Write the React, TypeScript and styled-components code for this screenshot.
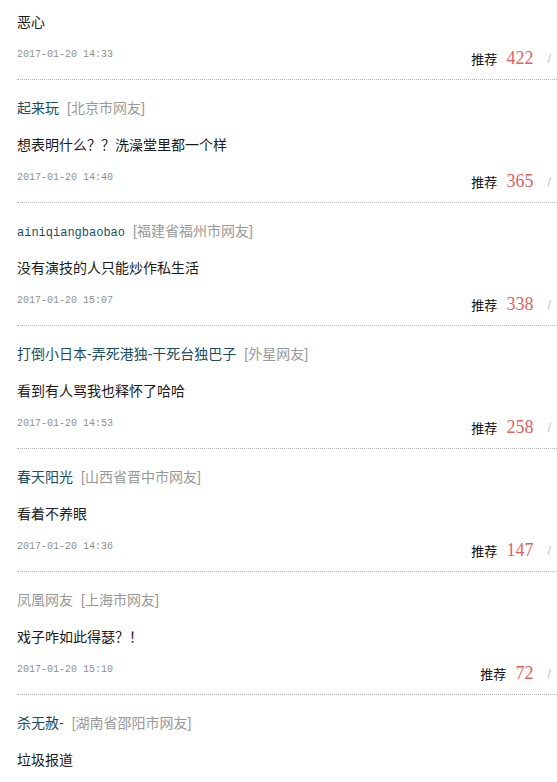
import React from "react";
import styled, { createGlobalStyle } from "styled-components";

const GlobalStyle = createGlobalStyle`
    html, body {
        margin: 0;
        padding: 0;
        background: #fff;
        overflow: hidden;
    }
    body {
        font-family: "Liberation Sans", "Noto Sans CJK SC", sans-serif;
    }
`;

const List = styled.div`
    width: 557px;
    padding-left: 17px;
    box-sizing: border-box;
`;

const Entry = styled.div<{ $partial?: boolean }>`
    padding-top: ${({ $partial }) => ($partial ? "12px" : "18px")};
    padding-bottom: 9px;
    border-bottom: 1px dotted #b4b4b4;
`;

const NameRow = styled.div`
    display: flex;
    align-items: baseline;
    height: 20px;
    line-height: 20px;
    font-size: 14px;
    margin-bottom: 17px;
    white-space: nowrap;
`;

const Name = styled.span<{ $anon?: boolean; $latin?: boolean }>`
    color: ${({ $anon }) => ($anon ? "#999" : "#1b4d62")};
    font-family: ${({ $latin }) =>
        $latin
            ? `"Liberation Mono", monospace`
            : `"Liberation Sans", "Noto Sans CJK SC", sans-serif`};
    font-size: ${({ $latin }) => ($latin ? "12px" : "14px")};
`;

const Location = styled.span`
    color: #999;
    margin-left: 8px;
`;

const Comment = styled.div`
    font-size: 14px;
    line-height: 20px;
    height: 20px;
    color: #1a1a1a;
    white-space: nowrap;
`;

const Footer = styled.div`
    display: flex;
    justify-content: space-between;
    align-items: flex-start;
    margin-top: 14px;
    height: 24px;
`;

const Time = styled.span`
    font-family: "Liberation Mono", monospace;
    font-size: 10px;
    line-height: 12px;
    padding-top: 3px;
    color: #8f8f8f;
`;

const Votes = styled.div`
    display: flex;
    align-items: center;
    height: 24px;
    margin-right: 6px;
`;

const VoteLabel = styled.span`
    font-size: 13px;
    color: #111;
`;

const VoteCount = styled.span`
    font-family: "Liberation Serif", serif;
    font-size: 18px;
    color: #e25f5f;
    margin-left: 9px;
`;

const Slash = styled.span`
    font-size: 13px;
    color: #c4c4c4;
    margin-left: 14px;
`;

type Item = {
    name?: string;
    anon?: boolean;
    latin?: boolean;
    place?: string;
    text: string;
    time: string;
    votes: number;
};

const items: Item[] = [
    { text: "恶心", time: "2017-01-20 14:33", votes: 422 },
    { name: "起来玩", place: "北京市网友", text: "想表明什么？？洗澡堂里都一个样", time: "2017-01-20 14:40", votes: 365 },
    { name: "ainiqiangbaobao", latin: true, place: "福建省福州市网友", text: "没有演技的人只能炒作私生活", time: "2017-01-20 15:07", votes: 338 },
    { name: "打倒小日本-弄死港独-干死台独巴子", place: "外星网友", text: "看到有人骂我也释怀了哈哈", time: "2017-01-20 14:53", votes: 258 },
    { name: "春天阳光", place: "山西省晋中市网友", text: "看着不养眼", time: "2017-01-20 14:36", votes: 147 },
    { name: "凤凰网友", anon: true, place: "上海市网友", text: "戏子咋如此得瑟？！", time: "2017-01-20 15:10", votes: 72 },
    { name: "杀无赦-", place: "湖南省邵阳市网友", text: "垃圾报道", time: "2017-01-20 15:02", votes: 60 },
];

const App: React.FC = () => {
    return (
        <>
            <GlobalStyle />
            <List>
                {items.map((item, i) => (
                    <Entry key={i} $partial={!item.name}>
                        {item.name && (
                            <NameRow>
                                <Name $anon={item.anon} $latin={item.latin}>
                                    {item.name}
                                </Name>
                                <Location>[{item.place}]</Location>
                            </NameRow>
                        )}
                        <Comment>{item.text}</Comment>
                        <Footer>
                            <Time>{item.time}</Time>
                            <Votes>
                                <VoteLabel>推荐</VoteLabel>
                                <VoteCount>{item.votes}</VoteCount>
                                <Slash>/</Slash>
                            </Votes>
                        </Footer>
                    </Entry>
                ))}
            </List>
        </>
    );
};

export default App;
